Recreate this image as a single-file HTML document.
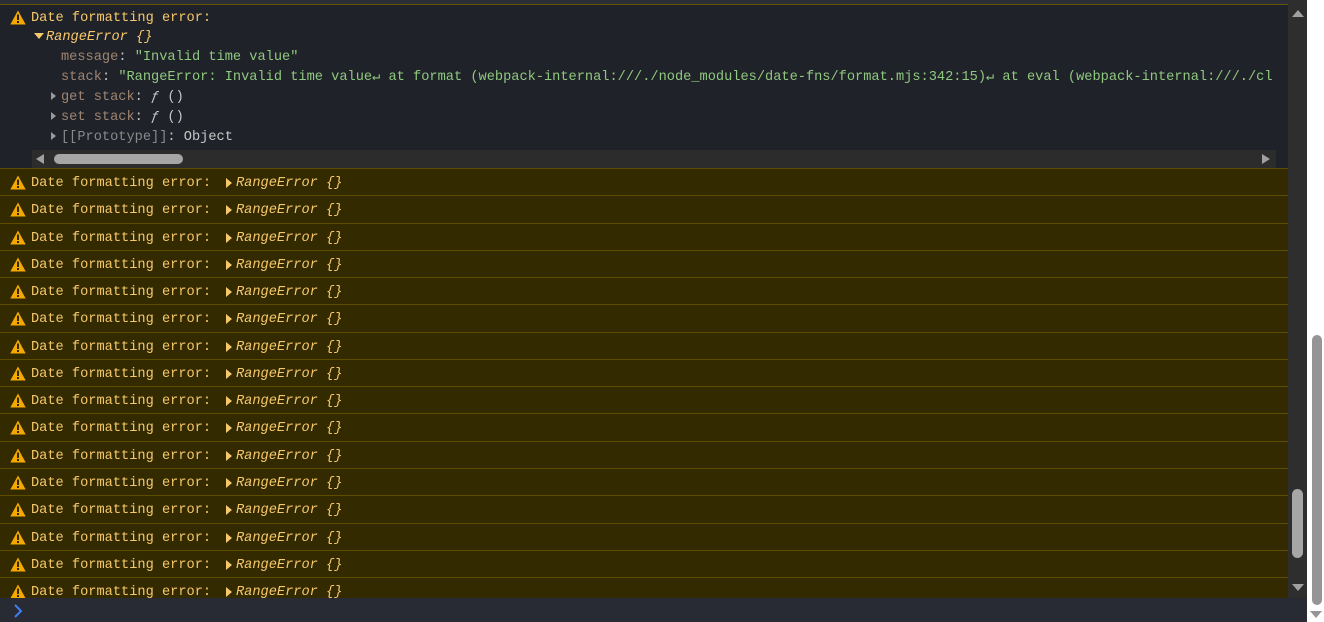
<!DOCTYPE html>
<html><head><meta charset="utf-8"><style>
*{margin:0;padding:0;box-sizing:border-box}
body{width:1324px;height:622px;overflow:hidden;background:#fff;font-family:"Liberation Mono","DejaVu Sans Mono",monospace;font-size:13.65px;position:relative}
#main{position:absolute;left:0;top:0;width:1288px;height:598px;background:#202229;overflow:hidden}
#topbar{position:absolute;left:0;top:0;width:1288px;height:4px;background:#2b2e35}
#first{position:absolute;left:0;top:4px;width:1288px;height:164px;background:#202229;border-top:1px solid #665500}
.l{position:absolute;white-space:pre;line-height:16px}
.w{color:#f6c86b}
.it{font-style:italic;color:#f6c86b}
.key{color:#9e8571}
.str{color:#8fc87f}
.dim{color:#8a8a8a}
.obj{color:#c7c7c7}
.tri{position:absolute;width:0;height:0}
.row{position:absolute;left:0;width:1288px;height:27.27px;background:#332a00;border-top:1px solid #5e4d00}
.warn{position:absolute;left:10px;top:6px}
#vs{position:absolute;left:1288px;top:0;width:19px;height:598px;background:#2e2e2e}
#bottom{position:absolute;left:0;top:598px;width:1307px;height:24px;background:#282b33}
#os{position:absolute;left:1307px;top:0;width:17px;height:622px;background:#fff}
</style></head><body>
<div id="main">
<div id="topbar"></div>
<div id="first">
 <svg class="warn" style="top:5px" width="16" height="15" viewBox="0 0 16 15"><path d="M8 0.5L15.7 14.5H0.3Z" fill="#f4a800"/><rect x="7" y="4.5" width="2" height="5.5" fill="#202020"/><rect x="7" y="11" width="2" height="2" fill="#202020"/></svg>
 <div class="l w" style="left:31px;top:6px">Date formatting error:</div>
 <div class="tri" style="left:34px;top:28px;border-left:5px solid transparent;border-right:5px solid transparent;border-top:6px solid #f6c86b"></div>
 <div class="l it" style="left:46px;top:25px">RangeError {}</div>
 <div class="l" style="left:61px;top:45px"><span class="key">message</span><span class="obj">: </span><span class="str">"Invalid time value"</span></div>
 <div class="l" style="left:61px;top:65px"><span class="key">stack</span><span class="obj">: </span><span class="str">"RangeError: Invalid time value↵ at format (webpack-internal:///./node_modules/date-fns/format.mjs:342:15)↵ at eval (webpack-internal:///./cl</span></div>
 <div class="tri" style="left:51px;top:87px;border-top:4px solid transparent;border-bottom:4px solid transparent;border-left:5px solid #9a9a9a"></div>
 <div class="l" style="left:61px;top:85px"><span class="key">get stack</span><span class="obj">: <i>ƒ</i> ()</span></div>
 <div class="tri" style="left:51px;top:107px;border-top:4px solid transparent;border-bottom:4px solid transparent;border-left:5px solid #9a9a9a"></div>
 <div class="l" style="left:61px;top:105px"><span class="key">set stack</span><span class="obj">: <i>ƒ</i> ()</span></div>
 <div class="tri" style="left:51px;top:127px;border-top:4px solid transparent;border-bottom:4px solid transparent;border-left:5px solid #9a9a9a"></div>
 <div class="l" style="left:61px;top:125px"><span class="dim">[[Prototype]]</span><span class="obj">: Object</span></div>
 <div style="position:absolute;left:32px;top:145px;width:1244px;height:18px;background:#2c2c2c">
  <div class="tri" style="left:4px;top:4px;border-top:5px solid transparent;border-bottom:5px solid transparent;border-right:8px solid #a0a0a0"></div>
  <div style="position:absolute;left:22px;top:4px;width:129px;height:10px;border-radius:5px;background:#a6a6a6"></div>
  <div class="tri" style="left:1230px;top:4px;border-top:5px solid transparent;border-bottom:5px solid transparent;border-left:8px solid #a0a0a0"></div>
 </div>
</div>
<div id="rows"></div>
</div>
<div id="vs">
 <div class="tri" style="left:4px;top:10px;border-left:6px solid transparent;border-right:6px solid transparent;border-bottom:7px solid #a0a0a0"></div>
 <div style="position:absolute;left:4px;top:489px;width:11px;height:69px;border-radius:6px;background:#a6a6a6"></div>
 <div class="tri" style="left:4px;top:584px;border-left:6px solid transparent;border-right:6px solid transparent;border-top:7px solid #a0a0a0"></div>
</div>
<div id="bottom"><svg style="position:absolute;left:13px;top:6px" width="10" height="14" viewBox="0 0 10 14"><path d="M2 1L8 7L2 13" stroke="#3d7ff5" stroke-width="2" fill="none"/></svg></div>
<div id="os">
 <div style="position:absolute;left:5px;top:335px;width:10px;height:270px;border-radius:5px;background:#959595"></div>
 <div class="tri" style="left:3px;top:611px;border-left:6px solid transparent;border-right:6px solid transparent;border-top:7px solid #959595"></div>
</div>
<script>
var h='';for(var i=0;i<16;i++){var t=168+i*27.27;
h+='<div class="row" style="top:'+t+'px"><svg class="warn" style="top:6px" width="16" height="15" viewBox="0 0 16 15"><path d="M8 0.5L15.7 14.5H0.3Z" fill="#f4a800"/><rect x="7" y="4.5" width="2" height="5.5" fill="#332a00"/><rect x="7" y="11" width="2" height="2" fill="#332a00"/></svg><div class="l w" style="left:31px;top:7px">Date formatting error: </div><div class="tri" style="left:226px;top:9px;border-top:5px solid transparent;border-bottom:5px solid transparent;border-left:6px solid #f6c86b"></div><div class="l it" style="left:236px;top:7px">RangeError {}</div></div>';}
document.getElementById('rows').innerHTML=h;
</script>
</body></html>
